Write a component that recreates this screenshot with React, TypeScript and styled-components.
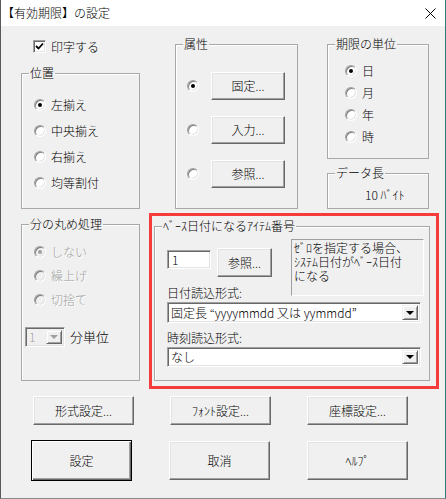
import React from 'react';
import styled, { createGlobalStyle, css } from 'styled-components';

const FONT = `"Noto Sans CJK JP", "Noto Sans CJK SC", "Noto Sans", sans-serif`;

const GlobalStyle = createGlobalStyle`
  html, body { margin: 0; padding: 0; background: #f0f0f0; }
  body { font-family: ${FONT}; font-size: 12px; color: #000; }
  * { box-sizing: border-box; }
`;

const Window = styled.div`
  width: 446px;
  height: 499px;
  display: flex;
  flex-direction: column;
  border-left: 1px solid #5a5a5a;
  border-right: 1px solid #2f7a78;
  border-bottom: 1px solid #8a8a8a;
  background: #f0f0f0;
  font-family: ${FONT};
  font-size: 12px;
  font-weight: 300;
  line-height: 16px;
  color: #000;
`;

const TitleBar = styled.div`
  height: 26px;
  flex: none;
  background: #fff;
  display: flex;
  align-items: center;
  justify-content: space-between;
  padding: 0 9px 0 1px;
`;

const TitleText = styled.span`
  font-size: 12px;
`;

const Body = styled.div`
  flex: 1;
  display: flex;
  flex-direction: column;
`;

const MainRow = styled.div`
  display: flex;
  align-items: flex-start;
  padding-left: 20px;
`;

const LeftCol = styled.div`
  width: 119px;
  display: flex;
  flex-direction: column;
`;

const RightCol = styled.div`
  width: 290px;
  margin-left: 9px;
  display: flex;
  flex-direction: column;
`;

const TopRow = styled.div`
  margin-top: 18px;
  padding-left: 26px;
  display: flex;
  align-items: flex-start;
`;

const UnitCol = styled.div`
  margin-left: 29px;
  width: 102px;
  display: flex;
  flex-direction: column;
`;

const CheckRow = styled.label`
  margin-top: 14px;
  padding-left: 12px;
  height: 13px;
  display: flex;
  align-items: center;
  gap: 5px;
`;

const CheckBox = styled.span`
  width: 13px;
  height: 13px;
  background: #fff;
  border: 1px solid;
  border-color: #a0a0a0 #fff #fff #a0a0a0;
  box-shadow: inset 1px 1px 0 #696969, inset -1px -1px 0 #e3e3e3;
  display: flex;
  align-items: center;
  justify-content: center;
`;

const Group = styled.div<{ $w: number; $h: number; $mt?: number }>`
  position: relative;
  width: ${(p) => p.$w}px;
  height: ${(p) => p.$h}px;
  margin-top: ${(p) => p.$mt ?? 0}px;
  border: 1px solid #a8a8a8;
  box-shadow: inset 1px 1px 0 #fff;
  flex: none;
`;

const Legend = styled.span`
  position: absolute;
  top: -9px;
  left: 7px;
  padding: 0 1px;
  background: #f0f0f0;
  line-height: 16px;
  white-space: nowrap;
`;

const Stack = styled.div<{ $pt: number; $pl: number; $gap: number }>`
  display: flex;
  flex-direction: column;
  padding-top: ${(p) => p.$pt}px;
  padding-left: ${(p) => p.$pl}px;
  gap: ${(p) => p.$gap}px;
`;

const RadioRow = styled.div<{ $disabled?: boolean }>`
  height: 16px;
  display: flex;
  align-items: center;
  gap: 5px;
  white-space: nowrap;
  ${(p) =>
    p.$disabled &&
    css`
      color: #a0a0a0;
      text-shadow: 1px 1px 0 #fff;
    `}
`;

const Radio = styled.span<{ $on?: boolean; $disabled?: boolean }>`
  position: relative;
  width: 12px;
  height: 12px;
  flex: none;
  border-radius: 50%;
  border: 1px solid;
  border-color: #a0a0a0 #fff #fff #a0a0a0;
  box-shadow: inset 1px 1px 0 #808080, inset -1px -1px 0 #e3e3e3;
  background: ${(p) => (p.$disabled ? '#f0f0f0' : '#fff')};
  ${(p) =>
    p.$on &&
    css`
      &::after {
        content: '';
        position: absolute;
        left: 3px;
        top: 3px;
        width: 4px;
        height: 4px;
        border-radius: 50%;
        background: ${p.$disabled ? '#a0a0a0' : '#000'};
      }
    `}
`;

const AttrRow = styled.div`
  height: 28px;
  display: flex;
  align-items: center;
  gap: 12px;
`;

const Button = styled.button<{ $w: number; $h: number; $default?: boolean }>`
  width: ${(p) => p.$w}px;
  height: ${(p) => p.$h}px;
  flex: none;
  padding: 0;
  margin: 0;
  font-family: ${FONT};
  font-size: 12px;
  font-weight: 300;
  line-height: 16px;
  color: #000;
  background: #f0f0f0;
  border: 1px solid;
  border-color: #fff #696969 #696969 #fff;
  box-shadow: inset -1px -1px 0 #a0a0a0, inset 1px 1px 0 #e3e3e3;
  white-space: nowrap;
  ${(p) =>
    p.$default &&
    css`
      border: 1px solid #000;
      box-shadow: inset 1px 1px 0 #fff, inset -1px -1px 0 #696969, inset -2px -2px 0 #a0a0a0;
    `}
`;

const DataText = styled.div`
  padding: 13px 0 0 37px;
  white-space: nowrap;
`;

const RedBox = styled.div`
  margin-top: 4px;
  width: 290px;
  height: 176px;
  border: 3px solid #f43c3c;
  padding: 10px 6px 0 2px;
`;

const BaseContent = styled.div`
  padding: 12px 0 0 12px;
  display: flex;
  flex-direction: column;
`;

const TopSection = styled.div`
  display: flex;
  align-items: flex-start;
`;

const LeftPart = styled.div`
  margin-top: 9px;
  display: flex;
  flex-direction: column;
`;

const InputRow = styled.div`
  display: flex;
  align-items: flex-start;
  gap: 6px;
`;

const Sunken = css`
  border: 1px solid;
  border-color: #a0a0a0 #fff #fff #a0a0a0;
  box-shadow: inset 1px 1px 0 #696969, inset -1px -1px 0 #e3e3e3;
`;

const NumberField = styled.div`
  ${Sunken};
  margin-top: 2px;
  width: 44px;
  height: 19px;
  background: #fff;
  padding: 1px 0 0 4px;
  line-height: 15px;
`;

const FieldLabel = styled.div<{ $mt: number }>`
  margin-top: ${(p) => p.$mt}px;
  line-height: 16px;
  white-space: nowrap;
`;

const StaticBox = styled.div`
  margin-left: 19px;
  width: 133px;
  height: 57px;
  border: 1px solid;
  border-color: #a0a0a0 #fff #fff #a0a0a0;
  padding: 1px 0 0 2px;
  line-height: 14px;
  white-space: nowrap;
`;

const Combo = styled.div<{ $w: number; $h: number; $mt?: number; $disabled?: boolean }>`
  ${Sunken};
  width: ${(p) => p.$w}px;
  height: ${(p) => p.$h}px;
  margin-top: ${(p) => p.$mt ?? 0}px;
  background: ${(p) => (p.$disabled ? '#f0f0f0' : '#fff')};
  color: ${(p) => (p.$disabled ? '#a0a0a0' : '#000')};
  display: flex;
  align-items: center;
  justify-content: space-between;
  padding: 2px 2px 2px 3px;
  white-space: nowrap;
`;

const ComboText = styled.span`
  font-size: 12px;
  line-height: 16px;
`;

const DropButton = styled.span<{ $disabled?: boolean }>`
  width: 16px;
  height: 100%;
  flex: none;
  background: #f0f0f0;
  border: 1px solid;
  border-color: #f0f0f0 #696969 #696969 #f0f0f0;
  box-shadow: inset 1px 1px 0 #fff, inset -1px -1px 0 #a0a0a0;
  display: flex;
  align-items: center;
  justify-content: center;
  &::after {
    content: '';
    border-left: 4px solid transparent;
    border-right: 4px solid transparent;
    border-top: 4px solid ${(p) => (p.$disabled ? '#a0a0a0' : '#000')};
  }
`;

const UnitComboRow = styled.div`
  margin: 19px 0 0 3px;
  display: flex;
  align-items: center;
  gap: 5px;
`;

const UnitLabel = styled.span`
  font-size: 13px;
  white-space: nowrap;
`;

const ButtonRow = styled.div<{ $mt: number; $pl: number; $gap: number }>`
  display: flex;
  align-items: center;
  margin-top: ${(p) => p.$mt}px;
  padding-left: ${(p) => p.$pl}px;
  gap: ${(p) => p.$gap}px;
`;

const CloseIcon = () => (
  <svg width="11" height="11" viewBox="0 0 11 11">
    <path d="M0.5 0.5 L10.5 10.5 M10.5 0.5 L0.5 10.5" stroke="#000" strokeWidth="1" />
  </svg>
);

const CheckMark = () => (
  <svg width="9" height="9" viewBox="0 0 9 9">
    <path d="M1 4 L3.5 6.5 L8 1.5" stroke="#000" strokeWidth="1.8" fill="none" />
  </svg>
);

export default function App() {
  return (
    <>
      <GlobalStyle />
      <Window>
        <TitleBar>
          <TitleText>【有効期限】の設定</TitleText>
          <CloseIcon />
        </TitleBar>
        <Body>
          <MainRow>
            <LeftCol>
              <CheckRow>
                <CheckBox>
                  <CheckMark />
                </CheckBox>
                印字する
              </CheckRow>
              <Group $w={119} $h={136} $mt={20}>
                <Legend>位置</Legend>
                <Stack $pt={23} $pl={12} $gap={10}>
                  <RadioRow>
                    <Radio $on />
                    左揃え
                  </RadioRow>
                  <RadioRow>
                    <Radio />
                    中央揃え
                  </RadioRow>
                  <RadioRow>
                    <Radio />
                    右揃え
                  </RadioRow>
                  <RadioRow>
                    <Radio />
                    均等割付
                  </RadioRow>
                </Stack>
              </Group>
              <Group $w={119} $h={157} $mt={15}>
                <Legend>分の丸め処理</Legend>
                <Stack $pt={19} $pl={12} $gap={8}>
                  <RadioRow $disabled>
                    <Radio $on $disabled />
                    しない
                  </RadioRow>
                  <RadioRow $disabled>
                    <Radio $disabled />
                    繰上げ
                  </RadioRow>
                  <RadioRow $disabled>
                    <Radio $disabled />
                    切捨て
                  </RadioRow>
                </Stack>
                <UnitComboRow>
                  <Combo $w={40} $h={20} $disabled>
                    <ComboText>1</ComboText>
                    <DropButton $disabled />
                  </Combo>
                  <UnitLabel>分単位</UnitLabel>
                </UnitComboRow>
              </Group>
            </LeftCol>
            <RightCol>
              <TopRow>
                <Group $w={123} $h={165}>
                  <Legend>属性</Legend>
                  <Stack $pt={27} $pl={11} $gap={16}>
                    <AttrRow>
                      <Radio $on />
                      <Button $w={74} $h={28}>固定...</Button>
                    </AttrRow>
                    <AttrRow>
                      <Radio />
                      <Button $w={74} $h={28}>入力...</Button>
                    </AttrRow>
                    <AttrRow>
                      <Radio />
                      <Button $w={74} $h={28}>参照...</Button>
                    </AttrRow>
                  </Stack>
                </Group>
                <UnitCol>
                  <Group $w={102} $h={115}>
                    <Legend>期限の単位</Legend>
                    <Stack $pt={18} $pl={17} $gap={6}>
                      <RadioRow>
                        <Radio $on />
                        日
                      </RadioRow>
                      <RadioRow>
                        <Radio />
                        月
                      </RadioRow>
                      <RadioRow>
                        <Radio />
                        年
                      </RadioRow>
                      <RadioRow>
                        <Radio />
                        時
                      </RadioRow>
                    </Stack>
                  </Group>
                  <Group $w={102} $h={36} $mt={14}>
                    <Legend>データ長</Legend>
                    <DataText>10 ﾊﾞｲﾄ</DataText>
                  </Group>
                </UnitCol>
              </TopRow>
              <RedBox>
                <Group $w={276} $h={155}>
                  <Legend>ﾍﾞｰｽ日付になるｱｲﾃﾑ番号</Legend>
                  <BaseContent>
                    <TopSection>
                      <LeftPart>
                        <InputRow>
                          <NumberField>1</NumberField>
                          <Button $w={55} $h={29}>参照...</Button>
                        </InputRow>
                        <FieldLabel $mt={8}>日付読込形式:</FieldLabel>
                      </LeftPart>
                      <StaticBox>
                        ｾﾞﾛを指定する場合、
                        <br />
                        ｼｽﾃﾑ日付がﾍﾞｰｽ日付
                        <br />
                        になる
                      </StaticBox>
                    </TopSection>
                    <Combo $w={254} $h={21} $mt={1}>
                      <ComboText>固定長 “yyyymmdd 又は yymmdd”</ComboText>
                      <DropButton />
                    </Combo>
                    <FieldLabel $mt={7}>時刻読込形式:</FieldLabel>
                    <Combo $w={254} $h={20} $mt={1}>
                      <ComboText>なし</ComboText>
                      <DropButton />
                    </Combo>
                  </BaseContent>
                </Group>
              </RedBox>
            </RightCol>
          </MainRow>
          <ButtonRow $mt={7} $pl={32} $gap={36}>
            <Button $w={101} $h={29}>形式設定...</Button>
            <Button $w={101} $h={29}>ﾌｫﾝﾄ設定...</Button>
            <Button $w={101} $h={29}>座標設定...</Button>
          </ButtonRow>
          <ButtonRow $mt={15} $pl={30} $gap={37}>
            <Button $w={101} $h={41} $default>設定</Button>
            <Button $w={101} $h={39}>取消</Button>
            <Button $w={101} $h={39}>ﾍﾙﾌﾟ</Button>
          </ButtonRow>
        </Body>
      </Window>
    </>
  );
}
